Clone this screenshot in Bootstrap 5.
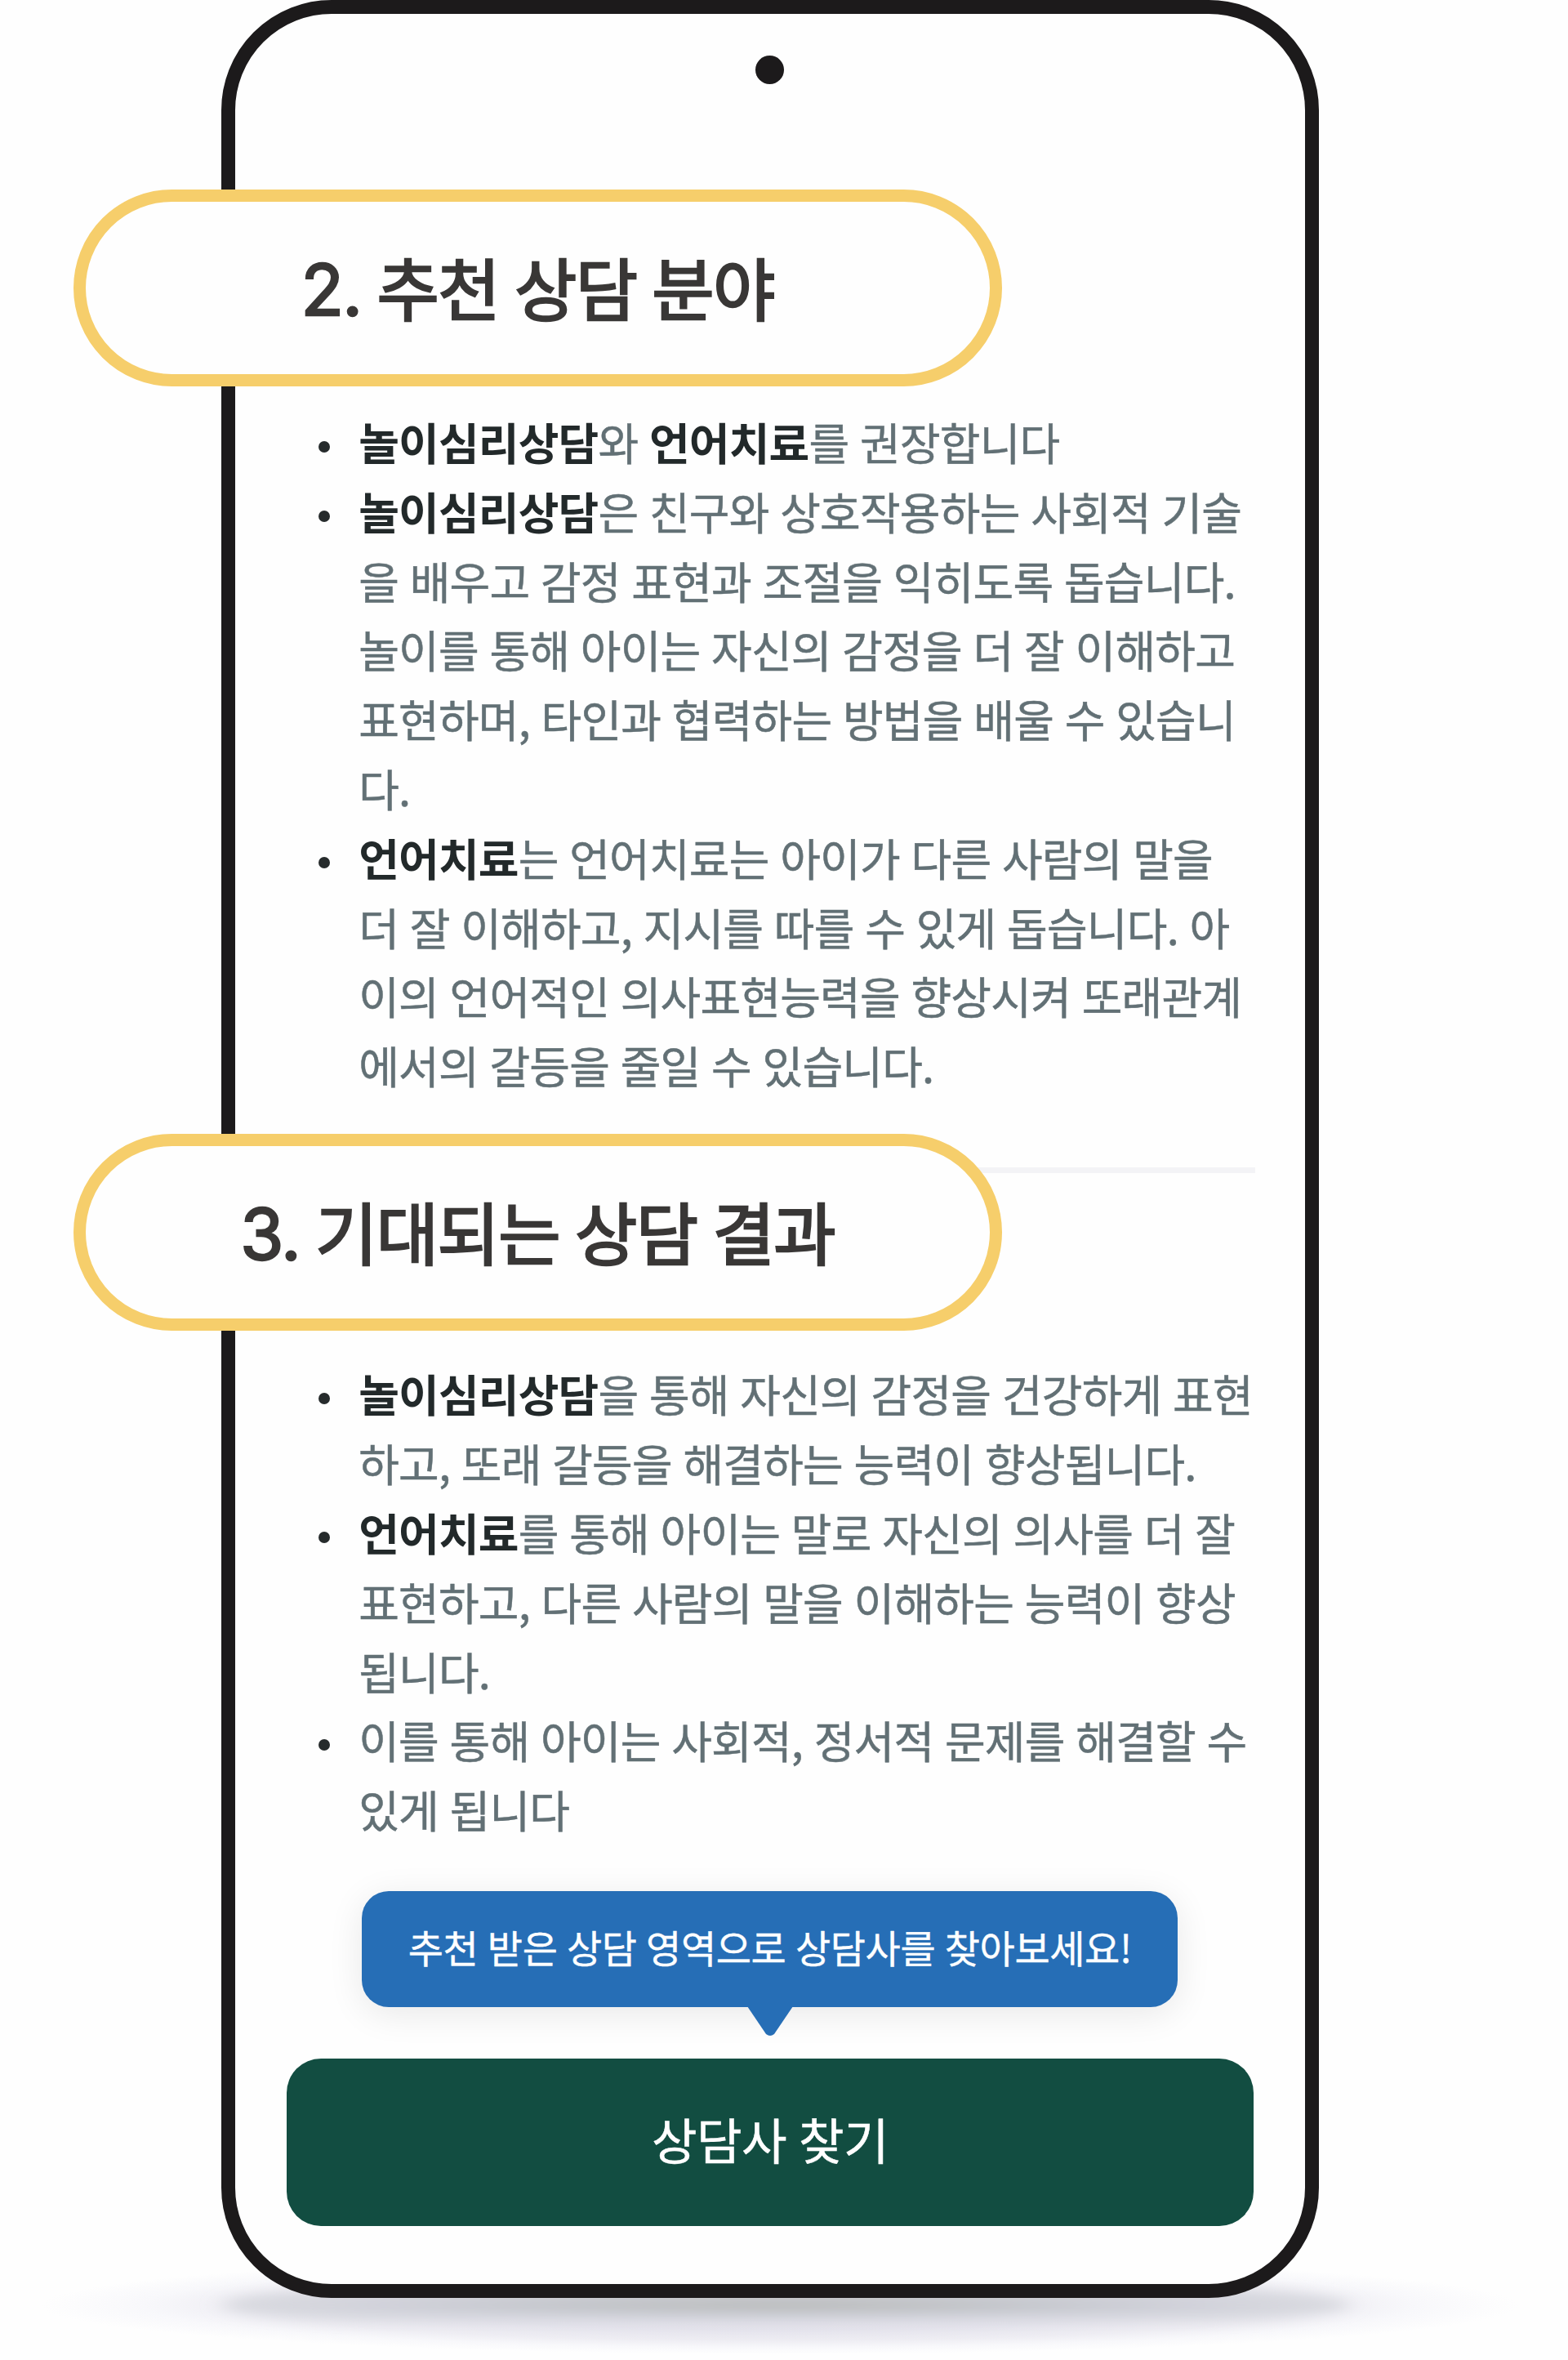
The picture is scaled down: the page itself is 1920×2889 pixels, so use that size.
<!DOCTYPE html>
<html lang="ko">
<head>
<meta charset="utf-8">
<meta name="viewport" content="width=device-width, initial-scale=1">
<title>추천 상담 분야</title>
<link href="https://cdn.jsdelivr.net/npm/bootstrap@5.3.0/dist/css/bootstrap.min.css" rel="stylesheet">
<style>
  body { background: #fefefe; font-family: "Noto Sans CJK KR", sans-serif; }
  .stage { width: 1920px; height: 2889px; padding-left: 270.5px; }
  .floor { left: 0; top: 2740px; width: 1920px; height: 149px; }
  .phone { width: 1344.5px; height: 2812.5px; border: 17.5px solid #1c1a1b; border-radius: 135px; background: #fefefe; padding: 50.5px 62.8px 70px 63.2px; }
  .camera { width: 35.4px; height: 35.4px; background: #1c1a1b; margin-left: 574px; }
  .pill { width: 1137px; height: 241.4px; margin-left: -261px; padding-top: 2px; border: 15.3px solid #f6ce6b; background: #fefefe; color: #393736; font-weight: 400; font-size: 83px; letter-spacing: -1.6px; word-spacing: -2.7px; line-height: 1; white-space: pre; -webkit-text-stroke: 2.5px #393736; }
  .pill-num { font-family: Inter, sans-serif; font-size: 86px; }
  .pill-first { margin-top: 128.7px; }
  .pill-second { margin-top: -48px; }
  .notes { margin: 0; padding: 0 0 0 88.5px; list-style: none; font-size: 54px; letter-spacing: -.8px; word-spacing: -.7px; line-height: 84.8px; color: #627075; white-space: nowrap; -webkit-text-stroke: .5px; }
  .notes li { position: relative; }
  .notes li::before { content: ""; position: absolute; left: -49.5px; top: 41px; width: 14px; height: 14px; border-radius: 50%; background: #262b2c; }
  .notes b { color: #22292a; font-weight: 700; -webkit-text-stroke: 0; }
  .notes-first { margin-top: 26px; }
  .notes-second { margin-top: 35px; }
  .rule { height: 7.3px; background: #f3f3f6; margin-top: 81.7px; margin-right: -1.5px; }
  .tip { width: 999.4px; height: 141.7px; margin: 57.6px 0 0 92.3px; padding-bottom: 7px; border-radius: 33px; background: #266eb6; font-size: 47px; letter-spacing: -.4px; word-spacing: -1.3px; line-height: 1; white-space: nowrap; box-shadow: 0 8px 44px rgba(0,0,0,.09); -webkit-text-stroke: .4px; }
  .tip-arrow { left: 472px; top: 141px; width: 56px; height: 36px; }
  .find { height: 205px; margin-top: 63.3px; padding-bottom: 15px; border: 0; border-radius: 42px; background: #124d41; color: #fff; font-size: 60.5px; letter-spacing: -.6px; word-spacing: -1.5px; line-height: 1; -webkit-text-stroke: .5px; }
</style>
</head>
<body>
<main class="stage position-relative overflow-hidden">
  <svg class="floor position-absolute" viewBox="0 0 1920 149" aria-hidden="true">
    <defs>
      <radialGradient id="glow"><stop offset="0" stop-color="#dcdbe6"/><stop offset=".5" stop-color="#e4e3ec"/><stop offset=".72" stop-color="#eeedf3"/><stop offset=".86" stop-color="#f8f8fb"/><stop offset="1" stop-color="#fefefe"/></radialGradient>
      <radialGradient id="core"><stop offset="0" stop-color="#b9b9b7"/><stop offset=".4" stop-color="#c2c5c9"/><stop offset=".75" stop-color="#d0d1da"/><stop offset="1" stop-color="#d9dae0"/></radialGradient>
      <filter id="soft" x="-10%" y="-80%" width="120%" height="260%"><feGaussianBlur stdDeviation="13 7"/></filter>
    </defs>
    <ellipse cx="955" cy="82" rx="905" ry="60" fill="url(#glow)"/>
    <rect x="272" y="62" width="1380" height="39" rx="200" ry="19.5" fill="url(#core)" filter="url(#soft)"/>
  </svg>

  <section class="phone position-relative d-flex flex-column">
    <div class="camera rounded-circle flex-shrink-0"></div>

    <h2 class="pill pill-first rounded-pill d-flex align-items-center justify-content-center mb-0 flex-shrink-0"><span><span class="pill-num">2.</span> 추천 상담 분야</span></h2>
    <ul class="notes notes-first">
      <li><b>놀이심리상담</b>와 <b>언어치료</b>를 권장합니다</li>
      <li><b>놀이심리상담</b>은 친구와 상호작용하는 사회적 기술<br>을 배우고 감정 표현과 조절을 익히도록 돕습니다.<br>놀이를 통해 아이는 자신의 감정을 더 잘 이해하고<br>표현하며, 타인과 협력하는 방법을 배울 수 있습니<br>다.</li>
      <li><b>언어치료</b>는 언어치료는 아이가 다른 사람의 말을<br>더 잘 이해하고, 지시를 따를 수 있게 돕습니다. 아<br>이의 언어적인 의사표현능력을 향상시켜 또래관계<br>에서의 갈등을 줄일 수 있습니다.</li>
    </ul>

    <div class="rule flex-shrink-0"></div>
    <h2 class="pill pill-second position-relative rounded-pill d-flex align-items-center justify-content-center mb-0 flex-shrink-0"><span><span class="pill-num">3.</span> 기대되는 상담 결과</span></h2>
    <ul class="notes notes-second">
      <li><b>놀이심리상담</b>을 통해 자신의 감정을 건강하게 표현<br>하고, 또래 갈등을 해결하는 능력이 향상됩니다.</li>
      <li><b>언어치료</b>를 통해 아이는 말로 자신의 의사를 더 잘<br>표현하고, 다른 사람의 말을 이해하는 능력이 향상<br>됩니다.</li>
      <li>이를 통해 아이는 사회적, 정서적 문제를 해결할 수<br>있게 됩니다</li>
    </ul>

    <div class="tip position-relative d-flex align-items-center justify-content-center text-white flex-shrink-0">
      추천 받은 상담 영역으로 상담사를 찾아보세요!
      <svg class="tip-arrow position-absolute" viewBox="0 0 56 36" aria-hidden="true"><path d="M0 0H56L33 34Q28 38 23 34Z" fill="#266eb6"/></svg>
    </div>
    <button type="button" class="find btn w-100 flex-shrink-0">상담사 찾기</button>
  </section>
</main>
<script src="https://cdn.jsdelivr.net/npm/bootstrap@5.3.0/dist/js/bootstrap.bundle.min.js"></script>
</body>
</html>
